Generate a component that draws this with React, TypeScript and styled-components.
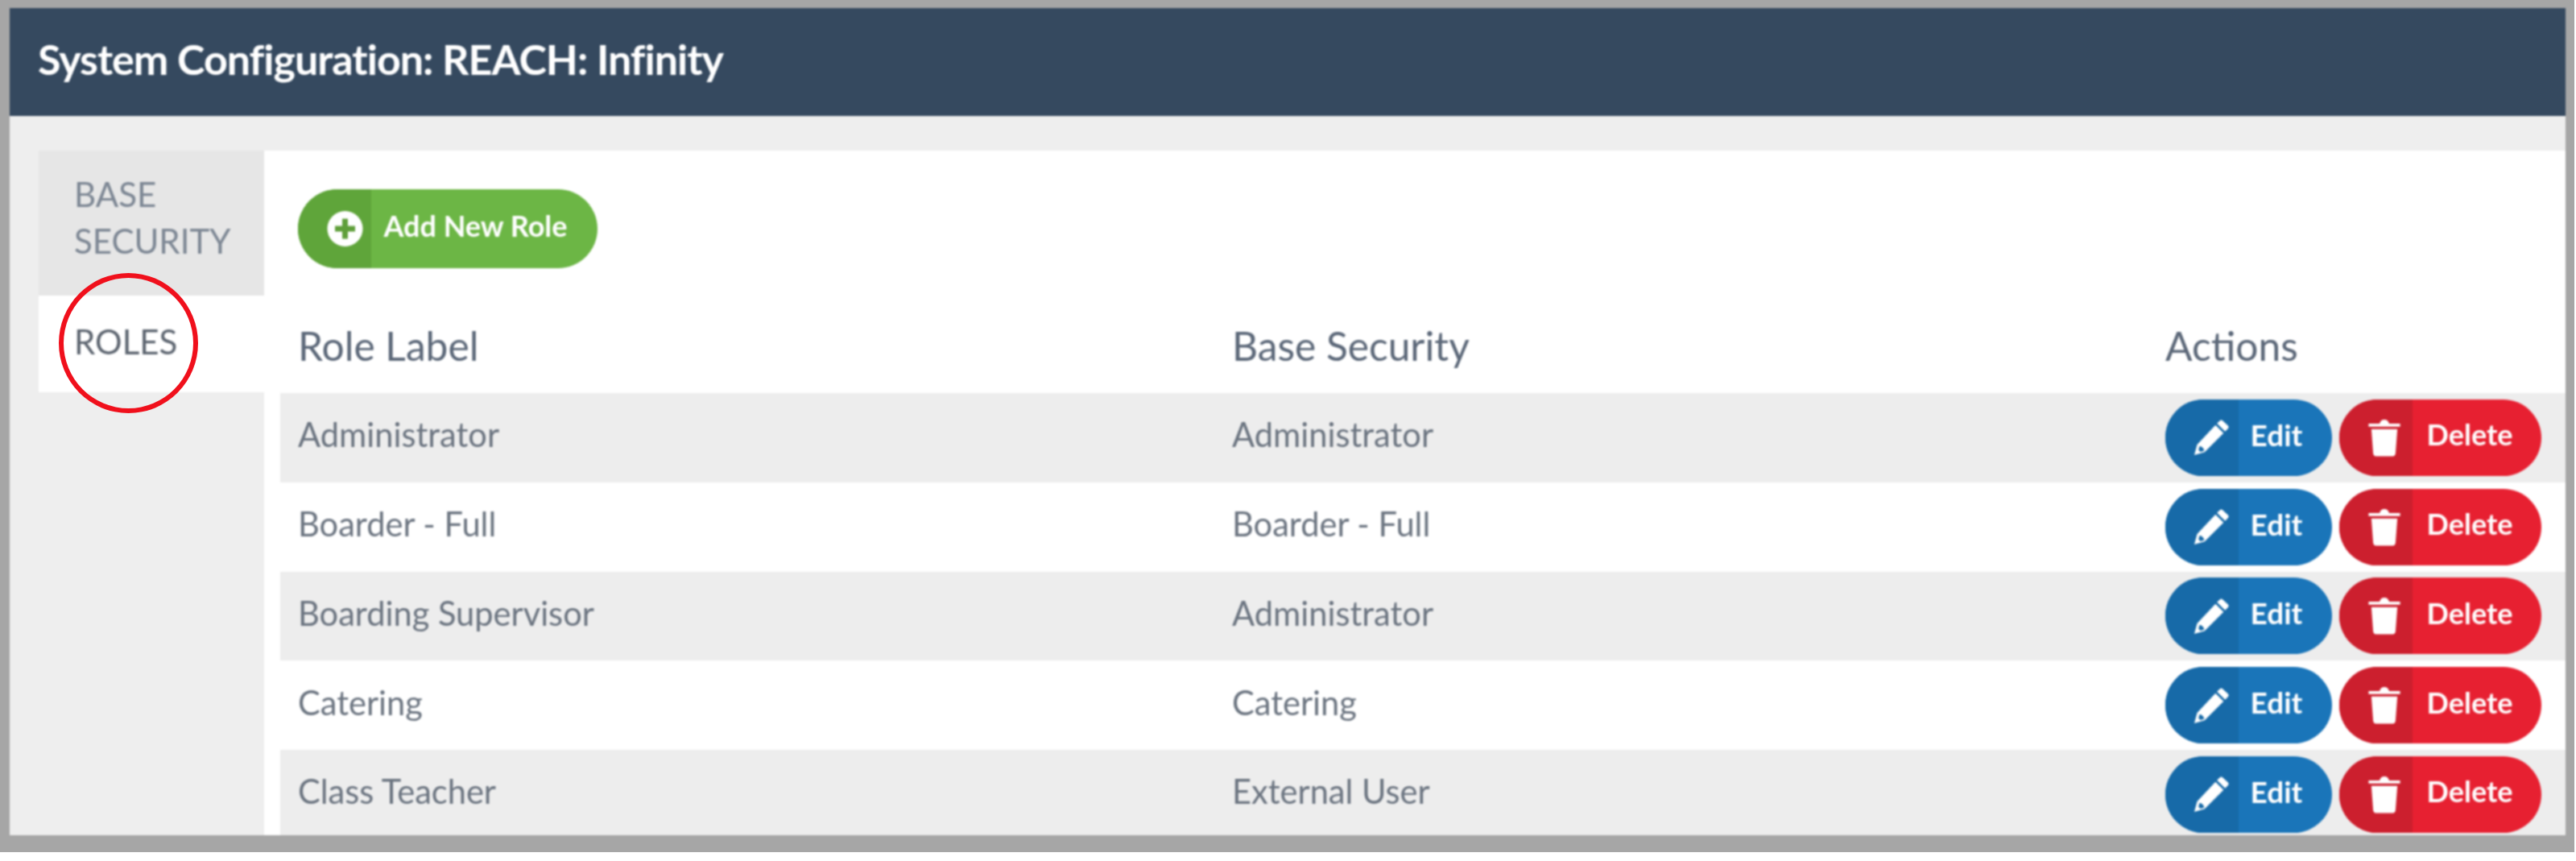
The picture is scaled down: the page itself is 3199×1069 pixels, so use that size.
import React from "react";
import styled, { createGlobalStyle } from "styled-components";

const Global = createGlobalStyle`
  html, body { margin: 0; padding: 0; background: #fff; }
  body { font-family: Lato, "Open Sans", sans-serif; }
  * { box-sizing: border-box; }
`;

const Frame = styled.div`
  position: relative;
  width: 3197px;
  height: 1058px;
  padding: 10px 11px 21px 12px;
  background: #a6a6a6;
`;

const Window = styled.div`
  height: 100%;
  background: #eeeeee;
  overflow: hidden;
  display: flex;
  flex-direction: column;
  filter: blur(0.8px);
`;

const Header = styled.header`
  flex: none;
  height: 134px;
  background: #35495f;
  display: flex;
  align-items: center;
  padding: 0 0 8px 35px;
  color: #fff;
  font-size: 52px;
  font-weight: 700;
  letter-spacing: -1px;
`;

const Body = styled.div`
  flex: 1;
  min-height: 0;
  display: flex;
  padding: 43px 0 0 36px;
`;

const Tabs = styled.nav`
  flex: none;
  width: 280px;
  display: flex;
  flex-direction: column;
`;

const Tab = styled.div<{ $active?: boolean; $height: number }>`
  height: ${(p) => p.$height}px;
  padding: ${(p) => (p.$active ? 28 : 25)}px 0 0 44px;
  background: ${(p) => (p.$active ? "#ffffff" : "#e6e6e6")};
  color: ${(p) => (p.$active ? "#5d6570" : "#7d8794")};
  font-size: 42px;
  line-height: 58px;
`;

const Panel = styled.main`
  flex: 1;
  min-width: 0;
  background: #fff;
  padding: 48px 0 0 20px;
`;

const Toolbar = styled.div`
  height: 98px;
  padding-left: 22px;
  margin-bottom: 29px;
`;

const Row = styled.div<{ $striped?: boolean }>`
  display: grid;
  grid-template-columns: 1160px 1159px 1fr;
  align-items: center;
  height: 110.75px;
  padding-left: 22px;
  background: ${(p) => (p.$striped ? "#ededed" : "#ffffff")};
  color: #6b7480;
  font-size: 41.6px;
`;

const Cell = styled.span`
  padding-bottom: 8px;
`;

const HeadRow = styled(Row)`
  height: 126px;
  color: #5b6778;
  font-size: 49.7px;
`;

const HeadCell = styled.span`
  padding-top: 8px;
`;

const Actions = styled.div`
  display: flex;
  gap: 9px;
`;

const PillButton = styled.button<{ $main: string; $width: number; $height: number; $font: number }>`
  display: flex;
  align-items: stretch;
  width: ${(p) => p.$width}px;
  height: ${(p) => p.$height}px;
  padding: 0;
  border: 0;
  border-radius: 49px;
  overflow: hidden;
  background: ${(p) => p.$main};
  color: #fff;
  font-family: Lato, sans-serif;
  font-weight: 700;
  font-size: ${(p) => p.$font}px;
`;

const IconSlot = styled.span<{ $dark: string; $gap: number }>`
  flex: none;
  width: 91px;
  padding-right: ${(p) => p.$gap}px;
  background: ${(p) => p.$dark};
  display: flex;
  align-items: center;
  justify-content: flex-end;
`;

const Label = styled.span<{ $shift: number }>`
  flex: 1;
  display: flex;
  align-items: center;
  justify-content: center;
  padding: 0 ${(p) => p.$shift}px 8px 0;
`;

const Annotation = styled.div`
  position: absolute;
  left: 73px;
  top: 339px;
  width: 173px;
  height: 174px;
  border: 6px solid #f0101c;
  border-radius: 50%;
`;

const PlusIcon = () => (
  <svg width="45" height="44" viewBox="0 0 44 44">
    <circle cx="22" cy="22" r="22" fill="#fff" />
    <path d="M22 9.500v25M9.500 22h25" stroke="#5f9f3a" strokeWidth="7" />
  </svg>
);

const PencilIcon = () => (
  <svg width="46" height="48" viewBox="0 0 48 48" fill="#fff">
    <path d="M35 2.500a3 3 0 0 1 4 0l6.500 6.200a3 3 0 0 1 0 4.200l-3.500 3.600L31.500 6z" />
    <path d="M29.500 8 40 18.500 15.500 43 2 47l3.800-13.500zM9 35.200 7.500 40.500l2.500 2.300 5-1.500c-.5-3-3-5.600-6-6.100z" fillRule="evenodd" />
  </svg>
);

const TrashIcon = () => (
  <svg width="40" height="47" viewBox="0 0 40 48" fill="#fff">
    <path d="M0 6h14c.5-3 3-5 6-5s5.500 2 6 5h14v4H0z" />
    <path d="M3.500 13h33l-2.300 31c-.2 2-1.500 3.500-3.500 3.500H9.300c-2 0-3.300-1.500-3.500-3.500z" />
  </svg>
);

const rows = [
  ["Administrator", "Administrator"],
  ["Boarder - Full", "Boarder - Full"],
  ["Boarding Supervisor", "Administrator"],
  ["Catering", "Catering"],
  ["Class Teacher", "External User"],
];

export default function App() {
  return (
    <>
      <Global />
      <Frame>
        <Window>
          <Header>System Configuration: REACH: Infinity</Header>
          <Body>
            <Tabs>
              <Tab $height={180}>BASE<br />SECURITY</Tab>
              <Tab $height={120} $active>ROLES</Tab>
            </Tabs>
            <Panel>
              <Toolbar>
                <PillButton $main="#6cb645" $width={372} $height={98} $font={36}>
                  <IconSlot $dark="#5fa53a" $gap={10}><PlusIcon /></IconSlot>
                  <Label $shift={22}>Add New Role</Label>
                </PillButton>
              </Toolbar>
              <HeadRow>
                <HeadCell>Role Label</HeadCell>
                <HeadCell>Base Security</HeadCell>
                <HeadCell>Actions</HeadCell>
              </HeadRow>
              {rows.map(([role, base], i) => (
                <Row key={role} $striped={i % 2 === 0}>
                  <Cell>{role}</Cell>
                  <Cell>{base}</Cell>
                  <Actions>
                    <PillButton $main="#1a75b9" $width={207} $height={95} $font={37}>
                      <IconSlot $dark="#176aa8" $gap={11}><PencilIcon /></IconSlot>
                      <Label $shift={22}>Edit</Label>
                    </PillButton>
                    <PillButton $main="#e72031" $width={251} $height={95} $font={36}>
                      <IconSlot $dark="#cc1f2e" $gap={15}><TrashIcon /></IconSlot>
                      <Label $shift={18}>Delete</Label>
                    </PillButton>
                  </Actions>
                </Row>
              ))}
            </Panel>
          </Body>
        </Window>
        <Annotation />
      </Frame>
    </>
  );
}
